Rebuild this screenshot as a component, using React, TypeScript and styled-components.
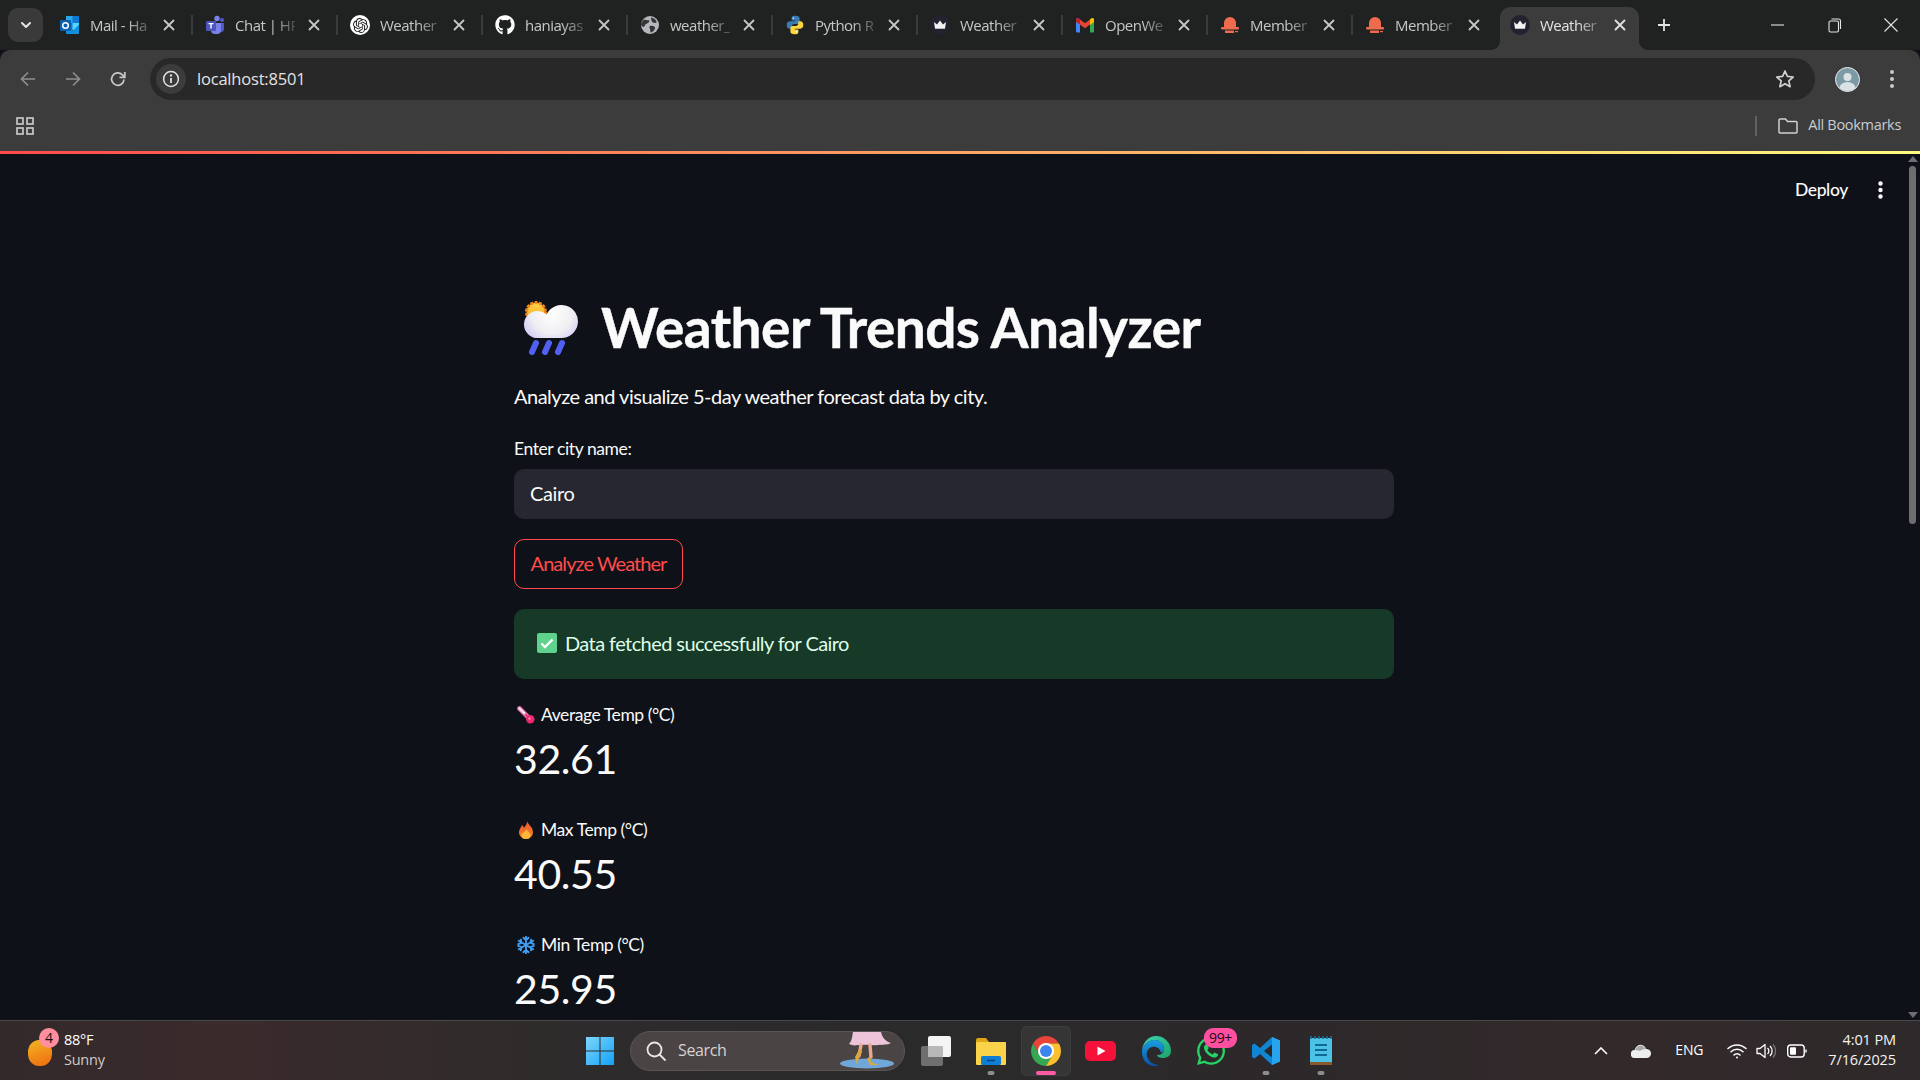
import React from 'react';
import styled, { createGlobalStyle } from 'styled-components';
import { FaGithub, FaWhatsapp } from 'react-icons/fa';
import { SiOpenai } from 'react-icons/si';

const Global = createGlobalStyle`
  html, body { margin: 0; padding: 0; height: 100%; background: #0e1117; overflow: hidden; }
  #root { height: 100%; }
  * { box-sizing: border-box; }
`;

const UI = `"Open Sans", "Noto Sans", sans-serif`;
const ST = `Lato, "Noto Sans", sans-serif`;

const Screen = styled.div`
  width: 1920px; height: 1080px; display: flex; flex-direction: column; overflow: hidden;
  font-family: ${ST}; background: #0e1117; color: #fafafa;
`;
const TabStrip = styled.div`
  height: 50px; flex: none; background: #202222; display: flex; align-items: center; padding-left: 8px;
`;
const TabMenu = styled.div`
  width: 35px; height: 34px; border-radius: 10px; background: #3a3a3a; margin-right: 4px;
  display: flex; align-items: center; justify-content: center;
`;
const Tab = styled.div<{ $noSep?: boolean }>`
  width: 145px; height: 34px; flex: none; display: flex; align-items: center; padding-left: 13px; position: relative;
  &::after { content: ""; position: absolute; right: -1px; top: 7px; width: 2px; height: 20px; background: ${p => p.$noSep ? 'transparent' : '#3a3c3c'}; }
`;
const ActiveTab = styled.div`
  width: 139px; height: 43px; flex: none; align-self: flex-end; margin-left: 3px; display: flex; align-items: center; padding: 0 0 7px 10px;
  background: #3c3c3c; border-radius: 10px 10px 0 0; position: relative;
  &::before, &::after { content: ""; position: absolute; bottom: 0; width: 10px; height: 10px; }
  &::before { left: -10px; background: radial-gradient(circle at 0 0, transparent 10px, #3c3c3c 10.5px); }
  &::after { right: -10px; background: radial-gradient(circle at 100% 0, transparent 10px, #3c3c3c 10.5px); }
`;
const Fav = styled.span`
  width: 20px; height: 20px; flex: none; display: flex; align-items: center; justify-content: center;
`;
const TabLabel = styled.span<{ $active?: boolean }>`
  width: 60px; margin-left: 10px; flex: none; white-space: nowrap; font: 15px/20px ${UI}; letter-spacing: -0.5px;
  color: ${p => p.$active ? '#e3e3e3' : '#c4c7c5'};
  -webkit-mask-image: linear-gradient(90deg, #000 62%, rgba(0,0,0,.25) 100%); mask-image: linear-gradient(90deg, #000 62%, rgba(0,0,0,.25) 100%);
`;
const TabClose = styled.span<{ $active?: boolean }>`
  width: 20px; margin-left: ${p => p.$active ? 10 : 9}px; flex: none; display: flex; justify-content: center; align-items: center;
`;
const NewTab = styled.span`margin-left: 15px; display: flex; width: 20px; justify-content: center;`;
const WinControls = styled.div`margin-left: auto; display: flex; gap: 41px; padding-right: 21px; align-items: center;`;

const Toolbar = styled.div`
  height: 50px; flex: none; background: #3c3c3c; border-radius: 10px 10px 0 0; display: flex; align-items: center; padding: 8px 0 0 5px;
`;
const NavSlot = styled.span`width: 45px; display: flex; justify-content: center;`;
const Address = styled.div`
  margin-left: 10px; width: 1665px; height: 42px; border-radius: 21px; background: #282828; display: flex; align-items: center; padding: 0 20px 0 6px;
`;
const InfoChip = styled.span`
  width: 30px; height: 30px; border-radius: 50%; background: #3c3c3c; display: flex; align-items: center; justify-content: center; flex: none;
`;
const Url = styled.span`margin-left: 11px; font: 16.5px/24px ${UI}; letter-spacing: -0.2px; color: #e3e3e3; flex: 1;`;
const Avatar = styled.span`margin-left: 20px; width: 25px; height: 25px; display: flex;`;
const MenuSlot = styled.span`margin-left: 30px; display: flex;`;

const BookmarkBar = styled.div`
  height: 51px; flex: none; background: #3c3c3c; display: flex; align-items: center; padding: 0 19px 0 16px;
`;
const BookmarkEnd = styled.div`margin-left: auto; display: flex; align-items: center;`;
const BarRule = styled.span`width: 2px; height: 20px; background: #5f6161; margin-right: 21px;`;
const BookmarkText = styled.span`margin-left: 10px; font: 14.5px/20px ${UI}; letter-spacing: -0.3px; color: #c7cdd3; padding-bottom: 1px;`;
const Rainbow = styled.div`
  height: 3px; flex: none; background: linear-gradient(90deg, #ff4b4b, #fffd80);
`;

const Body = styled.div`flex: 1; min-height: 0; display: flex; background: #0e1117;`;
const Main = styled.main`flex: 1; min-width: 0; display: flex; flex-direction: column; overflow: hidden;`;
const AppHeader = styled.header`
  height: 72px; flex: none; display: flex; align-items: center; justify-content: flex-end; padding-right: 22px;
`;
const Deploy = styled.span`font: 500 17.5px/22px ${ST}; letter-spacing: -0.35px; color: #fafafa; margin-right: 30px;`;
const Scrollbar = styled.div`
  width: 15px; flex: none; display: flex; flex-direction: column; align-items: center; padding: 2px 0;
`;
const ScrollThumb = styled.div`width: 7px; height: 358px; margin-top: 4px; border-radius: 4px; background: #6e6e70;`;
const ScrollDown = styled.span`margin-top: auto; display: flex;`;

const Content = styled.div`width: 880px; margin-left: 514px; padding-top: 70px; display: flex; flex-direction: column;`;
const TitleRow = styled.div`display: flex; align-items: center; height: 66px; padding: 0 0 3px 10px;`;
const Title = styled.h1`
  margin: 0 0 0 23px; font: 700 55px/63px ${ST}; letter-spacing: -0.55px; -webkit-text-stroke: 0.4px #fafafa; color: #fafafa; white-space: nowrap;
`;
const Lead = styled.p`margin: 19px 0 0; font: 400 20px/30px ${ST}; letter-spacing: -0.5px; color: #fafafa;`;
const FieldLabel = styled.label`margin-top: 27px; font: 400 17.5px/22px ${ST}; letter-spacing: -0.4px; color: #fafafa;`;
const CityInput = styled.div`
  margin-top: 9px; height: 50px; border-radius: 10px; background: #262730; display: flex; align-items: center; padding: 0 0 2px 16px;
  font: 400 20px/30px ${ST}; letter-spacing: -0.35px; color: #fafafa;
`;
const AnalyzeButton = styled.div`
  margin-top: 20px; width: 169px; height: 50px; border-radius: 10px; border: 1px solid #ff4b4b; color: #ff4b4b; display: flex; align-items: center; justify-content: center; padding-bottom: 2px;
  font: 400 20px/30px ${ST}; letter-spacing: -0.95px; white-space: nowrap;
`;
const SuccessAlert = styled.div`
  margin-top: 20px; height: 70px; border-radius: 10px; background: #173928; display: flex; align-items: center; padding: 0 0 2px 23px; gap: 8px;
  font: 400 20px/30px ${ST}; letter-spacing: -0.58px; color: #dffde9;
`;
const Metric = styled.div`margin-top: 25px; & + & { margin-top: 35px; }`;
const MetricLabel = styled.div`
  height: 22px; display: flex; align-items: center; padding-left: 3px; gap: 6px; font: 400 17.5px/22px ${ST}; letter-spacing: -0.43px; color: #fafafa;
`;
const MetricValue = styled.div`margin-top: 8px; font: 400 41px/50px ${ST}; letter-spacing: -0.4px; color: #fafafa;`;

const Taskbar = styled.footer`
  height: 60px; flex: none; border-top: 1px solid #4b4849; display: flex; align-items: center;
  background: linear-gradient(90deg, #33292a 0%, #3a2a2c 12%, #2d2b2b 30%, #2b2a2b 50%, #2d2829 70%, #33292b 85%, #2e292a 100%);
`;
const WeatherWidget = styled.div`width: 572px; flex: none; display: flex; align-items: center; padding-left: 28px;`;
const SunBlob = styled.span`
  width: 24px; height: 26px; border-radius: 46%; background: linear-gradient(160deg, #f3b623, #ee6a10); position: relative; margin-top: 4px;
`;
const SunBadge = styled.span`
  position: absolute; left: 11px; top: -12px; width: 20px; height: 20px; border-radius: 50%; background: #ff8f9f; color: #181010;
  font: 14px/20px ${UI}; text-align: center;
`;
const WeatherText = styled.div`margin-left: 12px; font: 14.5px/20px ${UI}; letter-spacing: -0.25px; color: #fff; padding-bottom: 2px;`;
const WeatherSub = styled.div`color: #cfcbcb;`;
const Slot = styled.div<{ $active?: boolean }>`
  width: ${p => p.$active ? 50 : 55}px; margin: 0 ${p => p.$active ? 2.5 : 0}px; height: 50px; flex: none; display: flex; align-items: center; justify-content: center; position: relative; border-radius: 6px;
  ${p => p.$active ? 'background: #353535; box-shadow: inset 0 0 0 1px #3d3d3d;' : ''}
`;
const RunDot = styled.span<{ $open?: boolean }>`
  position: absolute; bottom: 1px; left: 50%; transform: translateX(-50%); height: 4px; border-radius: 2px;
  width: ${p => p.$open ? '20px' : '7px'}; background: ${p => p.$open ? '#ff5aa5' : '#8d8d8d'};
`;
const SearchBox = styled.div`
  width: 275px; height: 40px; flex: none; margin: 0 3px; border-radius: 20px; background: #4b4445; border: 1px solid #5b5556; display: flex; align-items: center; padding: 0 0 0 14px;
  font: 16px/20px ${UI}; letter-spacing: -0.35px; color: #d6d2d2; position: relative; overflow: hidden;
`;
const SearchLabel = styled.span`margin-left: 11px; padding-bottom: 2px;`;
const SearchArt = styled.span`position: absolute; right: 9px; top: 0; display: flex;`;
const CountBadge = styled.span`
  position: absolute; top: 2px; left: 21px; width: 33px; height: 20px; border-radius: 9px; background: #ff4fa0; color: #1a0a10; font: 14px/20px ${UI}; letter-spacing: -0.3px; text-align: center;
`;
const Tray = styled.div`margin-left: auto; display: flex; align-items: center; padding-right: 24px; color: #fff;`;
const TrayText = styled.span`margin: 0 24px; font: 14px/20px ${UI}; letter-spacing: -0.2px; padding-bottom: 1px;`;
const TrayIcon = styled.span<{ $gap?: number }>`display: flex; margin-left: ${p => p.$gap ?? 0}px;`;
const Clock = styled.div`margin-left: 21px; text-align: right; font: 14.5px/20px ${UI}; letter-spacing: -0.1px; color: #f4f2f2; padding-bottom: 2px;`;

/* --- drawings --- */
const Close = ({ c = '#c7c7c7' }: { c?: string }) => (
  <svg width="12" height="12" viewBox="0 0 12 12"><path d="M1.5 1.5l9 9M10.5 1.5l-9 9" stroke={c} strokeWidth="1.8" strokeLinecap="round" /></svg>
);
const Outlook = () => (
  <svg width="20" height="20" viewBox="0 0 20 20"><path d="M6 1h13v14H6z" fill="#0f78d4" /><path d="M6 1h6.500v7H6z" fill="#28a8ea" /><path d="M12.500 8H19v7h-6.500z" fill="#50d9ff" /><path d="M19 9.500V18a1 1 0 0 1-1 1H7a1 1 0 0 1-1-1v-6l7 3.500z" fill="#1490df" /><rect x="0" y="5" width="11" height="11" rx="1" fill="#0a5fb0" /><circle cx="5.500" cy="10.500" r="2.800" fill="none" stroke="#fff" strokeWidth="1.500" /></svg>
);
const Teams = () => (
  <svg width="20" height="20" viewBox="0 0 20 20"><circle cx="12" cy="3.500" r="2.700" fill="#7b83eb" /><circle cx="17" cy="5" r="2" fill="#5059c9" /><path d="M14 8h5v6a3 3 0 0 1-4 3z" fill="#5059c9" /><path d="M6 8h10v7a4 4 0 0 1-4 4h-2a4 4 0 0 1-4-4z" fill="#7b83eb" /><rect x="1" y="6" width="10" height="10" rx="1.200" fill="#4b53bc" /><path d="M3.500 8.600h5M6 8.600v5" stroke="#fff" strokeWidth="1.400" /></svg>
);
const OpenAi = () => (
  <span style={{ display: 'flex', width: 20, height: 20, borderRadius: 10, background: '#fff', alignItems: 'center', justifyContent: 'center' }}><SiOpenai size={15} color="#1c1c1c" /></span>
);
const Globe = () => (
  <svg width="20" height="20" viewBox="0 0 20 20"><circle cx="10" cy="10" r="9" fill="#b4b8bc" /><path d="M4 4.500c2 0 3 1 4.500.8S9.500 7 8 8 5 9 4.500 11 3 12 1.500 10.500 2.500 6 4 4.500zM11 2.500c2 .3 5 2 5.500 4S14 8 13 7.500s-2-2-2-5zM10 11c2-.8 4.500 0 5 1.500s-2 4.500-4 5c-1 0-.5-2-1-3.500s-1-2.500 0-3z" fill="#333638" /></svg>
);
const Python = () => (
  <svg width="20" height="20" viewBox="0 0 24 24"><path d="M12 1C8 1 8 2.700 8 4v2.500h4.200v1H6C4 7.500 2 9 2 12s1.600 4.500 3.500 4.500H8v-2.700c0-1.700 1.400-3 3.100-3h4c1.400 0 2.400-1 2.400-2.500V4c0-1.600-1.500-3-5.500-3z" fill="#3a7cb3" /><circle cx="10" cy="3.800" r=".9" fill="#fff" /><path d="M12 23c4 0 4-1.700 4-3v-2.500h-4.200v-1H18c2 0 4-1.500 4-4.500s-1.600-4.500-3.500-4.500H16v2.700c0 1.700-1.400 3-3.100 3h-4c-1.400 0-2.400 1-2.400 2.500V20c0 1.600 1.500 3 5.500 3z" fill="#fcd53f" /><circle cx="14" cy="20.200" r=".9" fill="#fff" /></svg>
);
const Crown = () => (
  <svg width="20" height="20" viewBox="0 0 20 20"><circle cx="10" cy="10" r="10" fill="#23222e" /><path d="M4 7l3 2.500L10 5.500l3 4L16 7l-1 6.500H5z" fill="#f4f4f4" /><path d="M5 13.500h10" stroke="#bbb" strokeWidth="1" /></svg>
);
const Gmail = () => (
  <svg width="20" height="20" viewBox="0 0 20 20"><path d="M1 4.500a1.500 1.500 0 0 1 2.400-1.200L5 4.500V17.500H2.200A1.200 1.200 0 0 1 1 16.300z" fill="#4285f4" /><path d="M15 4.500l1.600-1.200A1.500 1.500 0 0 1 19 4.500v11.800a1.200 1.200 0 0 1-1.200 1.200H15z" fill="#34a853" /><path d="M5 4.500l5 3.800 5-3.800v5.100l-5 3.700-5-3.700z" fill="#ea4335" /><path d="M15 4.500l1.600-1.200A1.500 1.500 0 0 1 19 4.500v2.500l-4 2.900z" fill="#fbbc04" /><path d="M1 4.500a1.500 1.500 0 0 1 2.400-1.200L5 4.500v5L1 7z" fill="#c5221f" /></svg>
);
const Member = () => (
  <svg width="20" height="20" viewBox="0 0 20 20"><path d="M4 12.500V8a6 6 0 0 1 12 0v4.500z" fill="#ee6c4d" /><rect x="1" y="12" width="18" height="2.500" rx="1" fill="#ee6c4d" /><rect x="5" y="15.500" width="9" height="2.500" fill="#ee6c4d" /><rect x="15" y="16" width="3" height="1.200" fill="#ee6c4d" /></svg>
);
const RainCloud = () => (
  <svg width="54" height="54" viewBox="0 0 54 54" style={{ flex: 'none' }}>
    <defs>
      <radialGradient id="cl" gradientUnits="userSpaceOnUse" cx="28" cy="12" r="34"><stop offset="0" stopColor="#ffffff" /><stop offset=".6" stopColor="#efeff2" /><stop offset="1" stopColor="#cfc8f8" /></radialGradient>
      <linearGradient id="sn" x1="0" y1="0" x2="0" y2="1"><stop offset="0" stopColor="#ffd24a" /><stop offset="1" stopColor="#f6a81e" /></linearGradient>
    </defs>
    <circle cx="12" cy="11" r="9.500" fill="url(#sn)" stroke="#f2851b" strokeWidth="3" strokeDasharray="3 1.300" />
    <path d="M14 37a13.500 13.500 0 0 1-1-27c3 0 7 1 9.500 3.500A16.500 16.500 0 1 1 37.500 37z" fill="url(#cl)" />
    <path d="M12 42l-4 9M25 42l-4 9M38 42l-4 9" stroke="#5160f2" strokeWidth="6" strokeLinecap="round" />
  </svg>
);
const CheckEmoji = () => (
  <svg width="20" height="20" viewBox="0 0 20 20" style={{ flex: 'none' }}><rect width="20" height="20" rx="2" fill="#5fd38d" /><path d="M4.500 10.500l3.500 3.500 7.500-7.500" fill="none" stroke="#fff" strokeWidth="2.400" /></svg>
);
const Thermo = () => (
  <svg width="18" height="18" viewBox="0 0 18 18"><path d="M2.500 2.500l9 9" stroke="#c95596" strokeWidth="5" strokeLinecap="round" /><path d="M2.500 2.500l9 9" stroke="#f6dfea" strokeWidth="2.600" strokeLinecap="round" /><path d="M8 8l4 4" stroke="#f03a78" strokeWidth="2.400" /><circle cx="13.300" cy="13.300" r="4.200" fill="#f0266f" /><circle cx="12.500" cy="12.500" r="1.200" fill="#ff8ab0" /></svg>
);
const Flame = () => (
  <svg width="18" height="18" viewBox="0 0 14 18"><defs><linearGradient id="fl" x1="0" y1="0" x2="0" y2="1"><stop offset="0" stopColor="#e9532c" /><stop offset="1" stopColor="#f58a2c" /></linearGradient></defs><path d="M8 0c.5 3 6 5.500 6 11.500A7 6.500 0 0 1 7 18a7 6.500 0 0 1-7-6.500C0 8 2 6.500 3 4c1 .6 1.500 1.600 1.800 2.800C6.500 5 8.300 3 8 0z" fill="url(#fl)" /><path d="M7.500 8c.5 2.500 4 3.500 4 6.500a4.500 3.500 0 0 1-9 0c0-2.500 4-3.500 5-6.500z" fill="#ffb43a" /></svg>
);
const Snow = () => (
  <svg width="18" height="18" viewBox="0 0 18 18" stroke="#3f9ef0" strokeWidth="1.900" fill="none" strokeLinecap="round"><path d="M9 .700v16.600M1.800 4.800l14.400 8.400M16.200 4.800L1.800 13.200M6.400 1.800L9 4.200l2.600-2.400M6.400 16.200L9 13.800l2.600 2.400M1.200 8.200L4.500 7 3.800 3.600M16.800 9.800L13.500 11l.7 3.400M16.800 8.200L13.500 7l.7-3.400M1.200 9.800L4.500 11l-.7 3.400" /></svg>
);
const Chrome = () => (
  <svg width="30" height="30" viewBox="1 1 30 30"><path d="M3.010 8.500A15 15 0 0 1 28.990 8.500H16V16L9.500 19.750Z" fill="#e8443a" /><path d="M3.010 8.500A15 15 0 0 0 16 31L22.500 19.750 16 16 9.500 19.750Z" fill="#34a853" /><path d="M28.990 8.500A15 15 0 0 1 16 31L22.500 19.750 16 16V8.500Z" fill="#fbc02d" /><circle cx="16" cy="16" r="8" fill="#fff" /><circle cx="16" cy="16" r="6" fill="#3d85ee" /></svg>
);

export default function App() {
  const tabs: [React.ReactNode, string][] = [
    [<Outlook />, 'Mail - Ha'], [<Teams />, 'Chat | HP'], [<OpenAi />, 'Weather'], [<FaGithub size={20} color="#fff" />, 'haniayas'], [<Globe />, 'weather_'],
    [<Python />, 'Python R'], [<Crown />, 'Weather'], [<Gmail />, 'OpenWe'], [<Member />, 'Member'], [<Member />, 'Member'],
  ];
  return (
    <Screen>
      <Global />
      <TabStrip>
        <TabMenu><svg width="14" height="14" viewBox="0 0 14 14"><path d="M3 5l4 4 4-4" fill="none" stroke="#e3e3e3" strokeWidth="2" strokeLinecap="round" strokeLinejoin="round" /></svg></TabMenu>
        {tabs.map(([icon, label], i) => (
          <Tab key={i} $noSep={i === 9}>
            <Fav>{icon}</Fav><TabLabel>{label}</TabLabel><TabClose><Close /></TabClose>
          </Tab>
        ))}
        <ActiveTab>
          <Fav><Crown /></Fav><TabLabel $active>Weather</TabLabel><TabClose $active><Close c="#e3e3e3" /></TabClose>
        </ActiveTab>
        <NewTab><svg width="14" height="14" viewBox="0 0 14 14"><path d="M7 1v12M1 7h12" stroke="#e3e3e3" strokeWidth="1.800" /></svg></NewTab>
        <WinControls>
          <svg width="16" height="16" viewBox="0 0 16 16"><path d="M2 8h13" stroke="#e3e3e3" strokeWidth="1.100" /></svg>
          <svg width="16" height="16" viewBox="0 0 16 16" fill="none" stroke="#e3e3e3" strokeWidth="1.100"><rect x="3" y="4" width="9.500" height="11" rx="1.500" /><path d="M5.500 2h7a2 2 0 0 1 2 2v8" /></svg>
          <svg width="16" height="16" viewBox="0 0 16 16"><path d="M1.500 1.500l13 13M14.500 1.500l-13 13" stroke="#e3e3e3" strokeWidth="1.100" /></svg>
        </WinControls>
      </TabStrip>

      <Toolbar>
        <NavSlot><svg width="18" height="18" viewBox="0 0 18 18" fill="none" stroke="#8d8e8e" strokeWidth="1.700"><path d="M16 9H2.500M9 2.500L2.500 9 9 15.500" /></svg></NavSlot>
        <NavSlot><svg width="18" height="18" viewBox="0 0 18 18" fill="none" stroke="#8d8e8e" strokeWidth="1.700"><path d="M2 9h13.500M9 2.500L15.500 9 9 15.500" /></svg></NavSlot>
        <NavSlot><svg width="18" height="18" viewBox="0 0 18 18" fill="none" stroke="#c7c7c7" strokeWidth="1.800"><path d="M15 9.500A6.200 6.200 0 1 1 13.200 4.700L15.500 7" /><path d="M15.800 2v5.300h-5.300" /></svg></NavSlot>
        <Address>
          <InfoChip><svg width="18" height="18" viewBox="0 0 18 18" fill="none" stroke="#e3e3e3" strokeWidth="1.500"><circle cx="9" cy="9" r="7.400" /><path d="M9 8v5" strokeWidth="1.800" /><circle cx="9" cy="5.400" r=".6" strokeWidth="1.200" /></svg></InfoChip>
          <Url>localhost:8501</Url>
          <svg width="20" height="20" viewBox="0 0 20 20" fill="none" stroke="#d0d0d0" strokeWidth="1.700" strokeLinejoin="round"><path d="M10 2l2.400 5.400 5.800.6-4.400 3.900 1.300 5.800L10 14.700l-5.100 3 1.300-5.800L1.800 8l5.800-.6z" /></svg>
        </Address>
        <Avatar><svg width="25" height="25" viewBox="0 0 25 25"><circle cx="12.500" cy="12.500" r="12" fill="#7e99a6" stroke="#e8eaed" strokeWidth="1" /><circle cx="12.500" cy="10" r="4" fill="#dbe2e6" /><path d="M4.500 21a8 6 0 0 1 16 0 12 12 0 0 1-16 0z" fill="#dbe2e6" /></svg></Avatar>
        <MenuSlot><svg width="4" height="18" viewBox="0 0 4 18" fill="#c9c9c9"><circle cx="2" cy="2" r="2" /><circle cx="2" cy="9" r="2" /><circle cx="2" cy="16" r="2" /></svg></MenuSlot>
      </Toolbar>
      <BookmarkBar>
        <svg width="18" height="18" viewBox="0 0 18 18" fill="none" stroke="#c7c7c7" strokeWidth="1.700"><rect x="1" y="1" width="6" height="6" /><rect x="11" y="1" width="6" height="6" /><rect x="1" y="11" width="6" height="6" /><rect x="11" y="11" width="6" height="6" /></svg>
        <BookmarkEnd>
          <BarRule />
          <svg width="20" height="18" viewBox="0 0 20 18" fill="none" stroke="#d0d0d0" strokeWidth="1.500"><path d="M1 3a1 1 0 0 1 1-1h5.500l2 2.500H18a1 1 0 0 1 1 1V15a1 1 0 0 1-1 1H2a1 1 0 0 1-1-1z" /></svg>
          <BookmarkText>All Bookmarks</BookmarkText>
        </BookmarkEnd>
      </BookmarkBar>
      <Rainbow />

      <Body>
        <Main>
          <AppHeader>
            <Deploy>Deploy</Deploy>
            <svg width="5" height="18" viewBox="0 0 5 18" fill="#fafafa"><circle cx="2.500" cy="2.500" r="2.200" /><circle cx="2.500" cy="9" r="2.200" /><circle cx="2.500" cy="15.500" r="2.200" /></svg>
          </AppHeader>
          <Content>
            <TitleRow><RainCloud /><Title>Weather Trends Analyzer</Title></TitleRow>
            <Lead>Analyze and visualize 5-day weather forecast data by city.</Lead>
            <FieldLabel>Enter city name:</FieldLabel>
            <CityInput>Cairo</CityInput>
            <AnalyzeButton>Analyze Weather</AnalyzeButton>
            <SuccessAlert><CheckEmoji />Data fetched successfully for Cairo</SuccessAlert>
            <Metric><MetricLabel><Thermo />Average Temp (°C)</MetricLabel><MetricValue>32.61</MetricValue></Metric>
            <Metric><MetricLabel><Flame />Max Temp (°C)</MetricLabel><MetricValue>40.55</MetricValue></Metric>
            <Metric><MetricLabel><Snow />Min Temp (°C)</MetricLabel><MetricValue>25.95</MetricValue></Metric>
          </Content>
        </Main>
        <Scrollbar>
          <svg width="10" height="6" viewBox="0 0 10 6"><path d="M5 0l5 6H0z" fill="#6e6e70" /></svg>
          <ScrollThumb />
          <ScrollDown><svg width="10" height="6" viewBox="0 0 10 6"><path d="M5 6L0 0h10z" fill="#6e6e70" /></svg></ScrollDown>
        </Scrollbar>
      </Body>

      <Taskbar>
        <WeatherWidget>
          <SunBlob><SunBadge>4</SunBadge></SunBlob>
          <WeatherText>88°F<WeatherSub>Sunny</WeatherSub></WeatherText>
        </WeatherWidget>
        <Slot><svg width="30" height="30" viewBox="0 0 30 30"><defs><linearGradient id="wn" x1="0" y1="0" x2="1" y2="1"><stop offset="0" stopColor="#7fd6fb" /><stop offset="1" stopColor="#12a1f8" /></linearGradient></defs><path d="M1 1h13.500v13.500H1zM15.500 1H29v13.500H15.500zM1 15.500h13.500V29H1zM15.500 15.500H29V29H15.500z" fill="url(#wn)" /></svg></Slot>
        <SearchBox>
          <svg width="22" height="22" viewBox="0 0 22 22" fill="none" stroke="#e8e6e6" strokeWidth="1.800"><circle cx="9.500" cy="9.500" r="7" /><path d="M14.500 14.500L20 20" strokeLinecap="round" /></svg>
          <SearchLabel>Search</SearchLabel>
          <SearchArt>
            <svg width="56" height="38" viewBox="0 0 56 38">
              <ellipse cx="28" cy="31.500" rx="27" ry="5" fill="#6fa8d8" />
              <path d="M14 0h28c1 5 4 9 10 11-3 2-6 1-9 2-3-1-5 1-8 0-3 1-5-1-8 0-3-1-5 1-8 0-4 1-6 0-9-1 3-3 3-7 4-12z" fill="#eec4da" />
              <path d="M22 13l-2 11M31 13l1 12" stroke="#eaa98a" strokeWidth="3.400" strokeLinecap="round" />
              <path d="M23 20l-3 6-2 7-2-8 5-9zM31 24l1 6 8 3h-9l-3-6z" fill="#dca640" />
            </svg>
          </SearchArt>
        </SearchBox>
        <Slot><svg width="30" height="30" viewBox="0 0 30 30"><rect x="0" y="10" width="22" height="20" rx="2" fill="#6f6f6f" /><rect x="7" y="0" width="23" height="21" rx="2" fill="#f4f4f4" /><rect x="7" y="10" width="15" height="11" rx="1" fill="#b8b8b8" /></svg></Slot>
        <Slot><svg width="30" height="28" viewBox="0 0 30 28"><path d="M0 3a2 2 0 0 1 2-2h8l3 4h17v21a2 2 0 0 1-2 2H2a2 2 0 0 1-2-2z" fill="#e0a514" /><rect y="5" width="30" height="23" rx="1.500" fill="#fbd34a" /><rect x="5" y="19" width="20" height="9" rx="1.500" fill="#0f7fd6" /><path d="M11 23.500h8" stroke="#0a3e70" strokeWidth="1.500" /></svg><RunDot /></Slot>
        <Slot $active><Chrome /><RunDot $open /></Slot>
        <Slot><svg width="31" height="20" viewBox="0 0 31 20"><rect width="31" height="20" rx="5" fill="#f6113a" /><path d="M12.500 5.500l8 4.500-8 4.500z" fill="#fff" /></svg></Slot>
        <Slot><svg width="30" height="30" viewBox="0 0 30 30"><defs><linearGradient id="eg" x1="0" y1="0" x2="1" y2="1"><stop offset="0" stopColor="#3fd4b0" /><stop offset="1" stopColor="#1aa36a" /></linearGradient><linearGradient id="eb" x1="0" y1="0" x2="0" y2="1"><stop offset="0" stopColor="#1aa0e0" /><stop offset="1" stopColor="#0a4fa8" /></linearGradient></defs><path d="M15 0a15 15 0 0 1 15 15c0 5-4 7-8 7-3 0-6-1-6-3 3 0 7-1 7-6 0-6-5-9-9-9-6 0-11 4-13 10C2 6 8 0 15 0z" fill="url(#eg)" /><path d="M1 14c2-6 7-10 13-10 4 0 9 3 9 9 0 2-1 3-3 4-1-5-5-7-9-6-4 1-6 5-5 9 1 5 6 9 12 9-2 1-3 1-5 1C6 30 0 23 1 14z" fill="url(#eb)" /></svg></Slot>
        <Slot><FaWhatsapp size={32} color="#25d366" /><CountBadge>99+</CountBadge></Slot>
        <Slot><svg width="30" height="30" viewBox="0 0 30 30"><path d="M21 1l8 3.500v21L21 29 9 18 3.500 22.500 1 21V9l2.500-1.500L9 12zM21 8.500L13 15l8 6.500z" fill="#0e86d4" fillRule="evenodd" /><path d="M21 1l8 3.500v21L21 29z" fill="#26a5ee" /></svg><RunDot /></Slot>
        <Slot><svg width="22" height="30" viewBox="0 0 22 30"><rect y="2" width="22" height="26" fill="#4cc2e6" /><rect y="26" width="22" height="3" fill="#8a5a2c" /><path d="M1 3V0M5 3V0M9 3V0M13 3V0M17 3V0M21 3V0" stroke="#1a6f95" strokeWidth="1.600" /><path d="M5 9h12M5 14h12M5 19h12" stroke="#0f6a94" strokeWidth="2" /></svg><RunDot /></Slot>
        <Tray>
          <svg width="14" height="8" viewBox="0 0 14 8"><path d="M1 7l6-6 6 6" fill="none" stroke="#fff" strokeWidth="1.600" /></svg>
          <TrayIcon $gap={23}><svg width="20" height="14" viewBox="0 0 20 14"><path d="M4 14a4 4 0 0 1-.5-8C5 2 8 0 11 1c2 .5 3.500 2 4 4a4.500 4.500 0 0 1 1 9z" fill="#eeeeee" /><path d="M4 6c2-4 6-6 9-3l2 2c-3 0-5 1-6 2-2-1-3-1-5-1z" fill="#a8a8a8" /></svg></TrayIcon>
          <TrayText>ENG</TrayText>
          <TrayIcon><svg width="20" height="16" viewBox="0 0 20 16" fill="none" stroke="#fff" strokeWidth="1.500" strokeLinecap="round"><path d="M1 5.500a13 13 0 0 1 18 0M4 8.800a8.500 8.500 0 0 1 12 0M7 12a4 4 0 0 1 6 0" /><circle cx="10" cy="14.500" r="1" fill="#fff" stroke="none" /></svg></TrayIcon>
          <TrayIcon $gap={9}><svg width="20" height="16" viewBox="0 0 20 16" fill="none" stroke="#fff" strokeWidth="1.300"><path d="M1 5.500h3L9 1.500v13l-5-4H1z" strokeLinejoin="round" /><path d="M11.500 5a4 4 0 0 1 0 6M14 3a7 7 0 0 1 0 10" /><path d="M17 1.500a9.500 9.500 0 0 1 0 13" stroke="#777" /></svg></TrayIcon>
          <TrayIcon $gap={11}><svg width="20" height="14" viewBox="0 0 20 14" fill="none" stroke="#fff" strokeWidth="1.400"><rect x=".7" y="1" width="16.500" height="12" rx="3" /><rect x="3" y="3.300" width="6" height="7.400" rx="1" fill="#fff" stroke="none" /><path d="M19 5.500v3" /></svg></TrayIcon>
          <Clock>4:01 PM<br />7/16/2025</Clock>
        </Tray>
      </Taskbar>
    </Screen>
  );
}
